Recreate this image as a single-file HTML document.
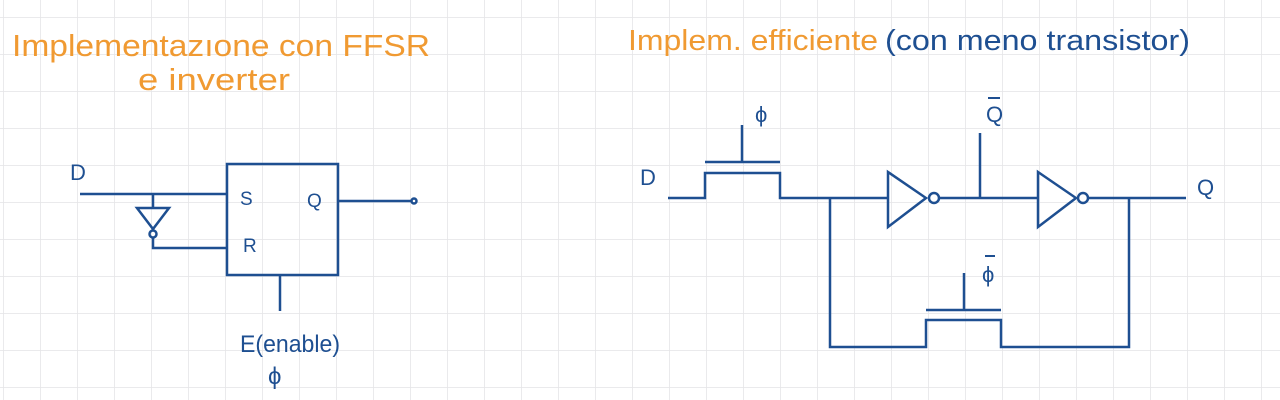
<!DOCTYPE html>
<html><head><meta charset="utf-8"><style>
html,body{margin:0;padding:0;background:#fff;width:1280px;height:400px;overflow:hidden}
svg{display:block}
text{font-family:"Liberation Sans",sans-serif;font-weight:normal}
</style></head><body>
<svg width="1280" height="400" viewBox="0 0 1280 400" xmlns="http://www.w3.org/2000/svg">
<defs>
<pattern id="g" x="3" y="17" width="37" height="37" patternUnits="userSpaceOnUse">
<path d="M0 0H37M0 0V37" stroke="#e4e4e6" stroke-width="1.5" fill="none"/>
</pattern>
</defs>
<rect width="1280" height="400" fill="#fff"/>
<rect width="1280" height="400" fill="url(#g)"/>

<g fill="#f09a32">
<text x="12" y="56" font-size="31" textLength="418" lengthAdjust="spacingAndGlyphs">Implementazıone  con  FFSR</text>
<text x="138" y="90" font-size="31" textLength="152" lengthAdjust="spacingAndGlyphs">e  inverter</text>
<text x="628" y="50" font-size="29" textLength="250" lengthAdjust="spacingAndGlyphs">Implem. efficiente</text>
</g>
<text x="885" y="50" font-size="29" fill="#1e4f91" textLength="305" lengthAdjust="spacingAndGlyphs">(con  meno  transistor)</text>

<g stroke="#1e4f91" stroke-width="2.5" fill="none" stroke-linejoin="miter">
<!-- left circuit -->
<path d="M80 194H227"/>
<rect x="227" y="164" width="111" height="111"/>
<path d="M153 194V208"/>
<path d="M137 208H169L153 229Z"/>
<circle cx="153" cy="234" r="3.5"/>
<path d="M153 238V248H227"/>
<path d="M338 201H411"/>
<circle cx="414" cy="201" r="2.5"/>
<path d="M280 275V311"/>

<!-- right circuit -->
<path d="M668 198H705V173H780V198H888"/>
<path d="M705 162H780M742 162V125"/>
<path d="M888 172L926 198L888 227Z"/>
<circle cx="934" cy="198" r="5"/>
<path d="M939 198H1038M980 198V133"/>
<path d="M1038 172L1076 198L1038 227Z"/>
<circle cx="1083" cy="198" r="5"/>
<path d="M1088 198H1186"/>
<path d="M830 198V347H926V320H1001V347H1129V198"/>
<path d="M926 310H1001M964 310V273"/>
</g>

<g fill="#1e4f91">
<text x="70" y="180" font-size="22">D</text>
<text x="240" y="205" font-size="19">S</text>
<text x="307" y="207" font-size="19">Q</text>
<text x="243" y="252" font-size="19">R</text>
<text x="240" y="352" font-size="24" textLength="100" lengthAdjust="spacingAndGlyphs">E(enable)</text>
<text x="268" y="384" font-size="24">ϕ</text>
<text x="640" y="185" font-size="22">D</text>
<text x="755" y="122" font-size="22">ϕ</text>
<text x="986" y="122" font-size="22">Q</text>
<path d="M988 98H1000" stroke="#1e4f91" stroke-width="2"/>
<text x="1197" y="195" font-size="22">Q</text>
<text x="982" y="282" font-size="22">ϕ</text>
<path d="M985 256H995" stroke="#1e4f91" stroke-width="2"/>
</g>
</svg>
</body></html>
